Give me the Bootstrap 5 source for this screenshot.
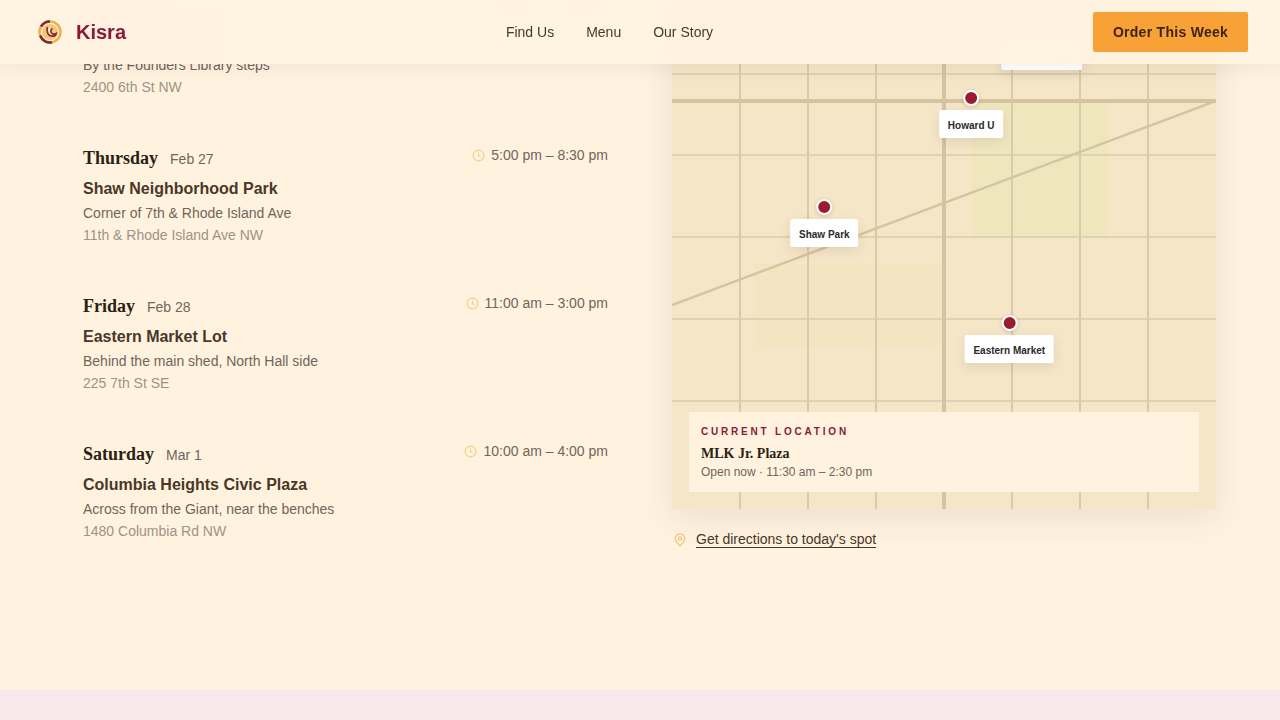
<!DOCTYPE html>
<html lang="en">
<head>
  <meta charset="UTF-8">
  <title>Kisra - Find Us</title>
  <meta name="viewport" content="width=device-width, initial-scale=1">
  <link href="https://cdn.jsdelivr.net/npm/bootstrap@5.3.3/dist/css/bootstrap.min.css" rel="stylesheet">
  <style>
    body {
      background-color: #FFF3E0;
      color: #3D2B1F;
      font-family: "Liberation Sans", Arial, sans-serif;
      font-size: 14px;
    }
    .site-nav {
      height: 64px;
      padding: 0 32px;
      background-color: rgba(255, 243, 224, .98);
      backdrop-filter: blur(12px);
      box-shadow: 0 2px 20px rgba(61, 43, 31, .08);
    }
    .brand { color: #8B1A3A; font-size: 20px; font-weight: 700; text-decoration: none; }
    .nav-links { gap: 32px; }
    .nav-links a { color: #4A3728; text-decoration: none; font-size: 14px; }
    .btn-order {
      width: 155px;
      height: 40px;
      background-color: #F7A136;
      color: #3D2410;
      border: 0;
      border-radius: 2px;
      font-size: 14px;
      font-weight: 700;
      letter-spacing: .28px;
    }
    .schedule-wrap {
      margin-top: -35px;
      padding: 0 64px 119px;
      display: grid;
      grid-template-columns: 544px 544px;
      gap: 64px;
    }
    .stop-list { padding-top: 14px; }
    .stop { padding: 18px 0 0 19px; height: 148px; }
    .stop-day { font-family: "Liberation Serif", "Times New Roman", serif; font-size: 18px; font-weight: 700; color: #2C1F14; line-height: 27px; }
    .stop-date { font-size: 14px; color: #73645A; margin-left: 12px; }
    .stop-time { font-size: 14px; color: #73645A; gap: 6px; line-height: 20px; }
    .stop-name { font-size: 16px; font-weight: 700; color: #4A3728; line-height: 24px; margin: 5px 0 0; }
    .stop-desc { color: #73645A; line-height: 22px; margin-top: 1px; }
    .stop-addr { color: #A09284; line-height: 22px; }
    .map-box {
      position: relative;
      height: 544px;
      background-color: #F5E6C8;
      box-shadow: 0 8px 32px rgba(61, 43, 31, .1);
      overflow: hidden;
    }
    .map-box svg { display: block; }
    .pin { position: absolute; transform: translateX(-50%); gap: 4px; }
    .pin-dot { width: 16px; height: 16px; border-radius: 50%; background-color: #9B1B30; border: 2px solid #fff; box-shadow: 0 1px 4px rgba(61, 43, 31, .2); }
    .pin-label {
      background-color: #fff;
      color: #2A2A2A;
      font-size: 10px;
      font-weight: 700;
      line-height: 25px;
      padding: 3px 8.5px 0;
      border-radius: 2px;
      white-space: nowrap;
      box-shadow: 0 4px 12px rgba(61, 43, 31, .1);
    }
    .pin-mlk { left: 68%; top: 57px; }
    .pin-howard { left: 55%; top: 125px; }
    .pin-shaw { left: 28%; top: 234px; }
    .pin-market { left: 62%; top: 350px; }
    .now-card {
      position: absolute;
      left: 17px;
      right: 17px;
      bottom: 17px;
      height: 80px;
      padding: 13px 12px 12px;
      background-color: #FFF3E0;
    }
    .now-label { font-size: 10px; font-weight: 700; letter-spacing: 2.8px; color: #8B1A3A; line-height: 14px; }
    .now-name { font-family: "Liberation Serif", "Times New Roman", serif; font-size: 14px; font-weight: 700; color: #2C1F14; line-height: 20px; margin-top: 5px; }
    .now-hours { font-size: 12px; color: #73645A; line-height: 18px; margin-top: -1px; }
    .directions { margin-top: 22px; gap: 10px; padding-left: 2px; }
    .directions a { color: #4A3728; text-decoration: none; border-bottom: 1px solid #4A3728; line-height: 16px; }
    .site-footer { height: 30px; background-color: #F8E8EC; }
  </style>
</head>
<body>

  <nav class="site-nav fixed-top d-flex align-items-center justify-content-between">
    <a class="brand d-flex align-items-center gap-2" href="#">
      <svg width="36" height="36" viewBox="0 0 36 36" fill="none">
        <circle cx="18" cy="18" r="10.5" stroke="#EDB24C" stroke-width="2.6"/>
        <path d="M8.2 21.5A10.5 10.5 0 0 0 20 28.3M9 12.5A10.5 10.5 0 0 1 18 7.5" stroke="#7E2A32" stroke-width="2.6"/>
        <circle cx="18" cy="18" r="8" fill="#F3C67E"/>
        <path d="M15.5 13C14 17.5 16 22.5 21 22.2C23 22 24 20.8 24.2 19.5C22 20.8 18.8 20 18.8 17.2C18.8 15.8 19.5 15 20.5 14.6" stroke="#8B2A2E" stroke-width="1.7" fill="#FBE9C8"/>
      </svg>
      Kisra
    </a>
    <div class="nav-links d-flex">
      <a href="#">Find Us</a>
      <a href="#">Menu</a>
      <a href="#">Our Story</a>
    </div>
    <button class="btn-order" type="button">Order This Week</button>
  </nav>

  <main class="schedule-wrap">
    <div class="stop-list" id="stopList"></div>

    <div>
      <div class="map-box">
        <svg width="544" height="544" viewBox="0 0 544 544">
          <defs><filter id="soft"><feGaussianBlur stdDeviation="1.5"/></filter></defs>
          <rect x="300" y="136" width="136" height="136" fill="#F0E6BE" filter="url(#soft)"/>
          <rect x="82" y="299" width="190" height="82" fill="#F2E5C2" filter="url(#soft)"/>
          <g stroke="#DACBA8">
            <path stroke-width="2" d="M68 0V544M136 0V544M204 0V544M340 0V544M408 0V544M476 0V544"/>
            <path stroke-width="1.4" d="M0 109H544M0 190H544M0 272H544M0 354H544M0 436H544"/>
          </g>
          <g stroke="#D4C4A0" stroke-width="4">
            <path d="M272 0V544M0 136H544"/>
          </g>
          <path d="M0 340L544 136" stroke="#D4C4A0" stroke-width="2.5"/>
        </svg>

        <div class="pin pin-mlk d-flex flex-column align-items-center"><span class="pin-dot"></span><span class="pin-label">MLK Jr. Plaza</span></div>
        <div class="pin pin-howard d-flex flex-column align-items-center"><span class="pin-dot"></span><span class="pin-label">Howard U</span></div>
        <div class="pin pin-shaw d-flex flex-column align-items-center"><span class="pin-dot"></span><span class="pin-label">Shaw Park</span></div>
        <div class="pin pin-market d-flex flex-column align-items-center"><span class="pin-dot"></span><span class="pin-label">Eastern Market</span></div>

        <div class="now-card">
          <div class="now-label">CURRENT LOCATION</div>
          <div class="now-name">MLK Jr. Plaza</div>
          <div class="now-hours">Open now · 11:30 am – 2:30 pm</div>
        </div>
      </div>

      <div class="directions d-flex align-items-center">
        <svg width="12" height="14" viewBox="0 0 12 14" fill="none" stroke="#F6C47C" stroke-width="1.2">
          <path d="M6 13C3.5 10.5 1.2 8 1.2 5.6A4.8 4.8 0 0 1 10.8 5.6C10.8 8 8.5 10.5 6 13Z"/>
          <circle cx="6" cy="5.6" r="1.7"/>
        </svg>
        <a href="#">Get directions to today's spot</a>
      </div>
    </div>
  </main>

  <footer class="site-footer"></footer>

  <script>
    const stops = [
      { day: "Wednesday", date: "Feb 26", time: "11:30 am – 2:30 pm", name: "Howard University", desc: "By the Founders Library steps", addr: "2400 6th St NW" },
      { day: "Thursday", date: "Feb 27", time: "5:00 pm – 8:30 pm", name: "Shaw Neighborhood Park", desc: "Corner of 7th & Rhode Island Ave", addr: "11th & Rhode Island Ave NW" },
      { day: "Friday", date: "Feb 28", time: "11:00 am – 3:00 pm", name: "Eastern Market Lot", desc: "Behind the main shed, North Hall side", addr: "225 7th St SE" },
      { day: "Saturday", date: "Mar 1", time: "10:00 am – 4:00 pm", name: "Columbia Heights Civic Plaza", desc: "Across from the Giant, near the benches", addr: "1480 Columbia Rd NW" }
    ];

    const clockIcon = `<svg width="13" height="13" viewBox="0 0 13 13" fill="none" stroke="#F3CE85" stroke-width="1.1"><circle cx="6.5" cy="6.5" r="5.4"/><path d="M6.5 3.4V6.8L8.6 7.8"/></svg>`;

    document.getElementById("stopList").innerHTML = stops.map(stop => `
      <div class="stop">
        <div class="d-flex justify-content-between align-items-start">
          <div><span class="stop-day">${stop.day}</span><span class="stop-date">${stop.date}</span></div>
          <div class="stop-time d-flex align-items-center">${clockIcon}<span>${stop.time}</span></div>
        </div>
        <div class="stop-name">${stop.name}</div>
        <div class="stop-desc">${stop.desc}</div>
        <div class="stop-addr">${stop.addr}</div>
      </div>
    `).join("");
  </script>

  <script src="https://cdn.jsdelivr.net/npm/bootstrap@5.3.3/dist/js/bootstrap.bundle.min.js"></script>
</body>
</html>
